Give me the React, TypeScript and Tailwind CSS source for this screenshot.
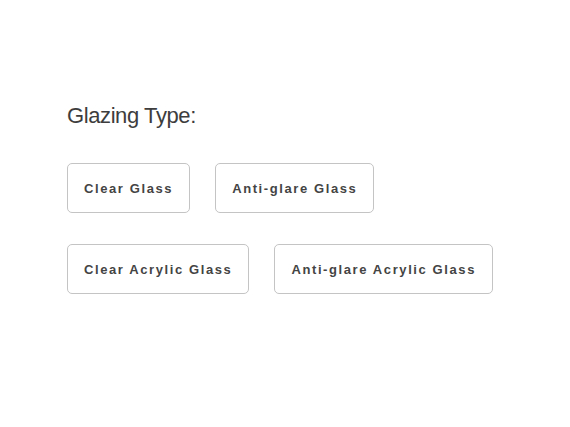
const options = [
  ['Clear Glass', 'Anti-glare Glass'],
  ['Clear Acrylic Glass', 'Anti-glare Acrylic Glass'],
]

export default function App() {
  return (
    <div className="w-[570px] h-[427px] bg-white pl-[67px] pt-[102px] font-['Liberation_Sans',Arial,sans-serif]">
      <h2 className="text-[22px] leading-[28px] font-light text-[#3d3d3d] tracking-[-0.4px]">Glazing Type:</h2>
      <div className="mt-[33px] flex flex-col gap-[31px]">
        {options.map((row, i) => (
          <div key={i} className="flex gap-[25px]">
            {row.map((label) => (
              <button
                key={label}
                className="h-[50px] px-[16px] pt-[2px] rounded-[5px] border border-[#c4c4c4] bg-white text-[13px] font-bold tracking-[1.6px] text-[#444]"
              >
                {label}
              </button>
            ))}
          </div>
        ))}
      </div>
    </div>
  )
}
